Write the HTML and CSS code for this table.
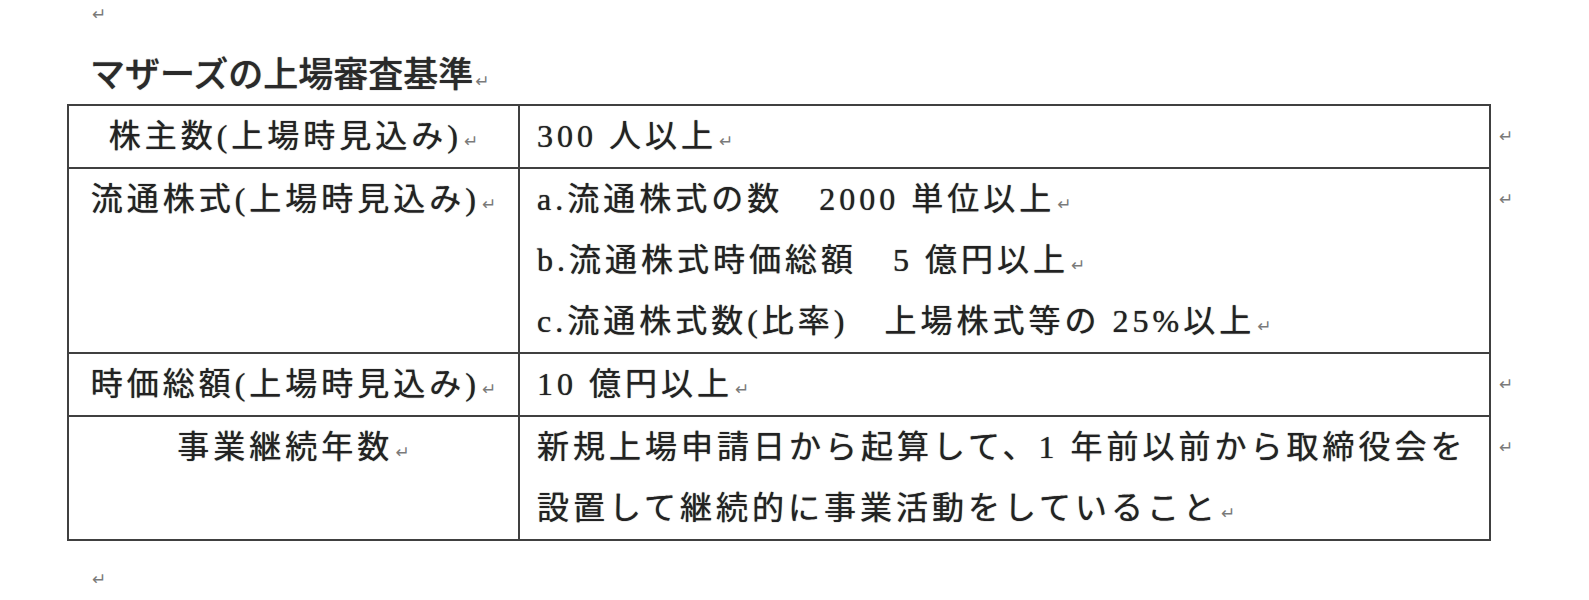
FILE: index.html
```html
<!DOCTYPE html>
<html lang="ja">
<head>
<meta charset="utf-8">
<title>マザーズの上場審査基準</title>
<link rel="stylesheet" href="styles.css">
</head>
<body>
<div class="page">
  <div class="mark-line top"><span class="pm">↵</span></div>
  <div class="title">マザーズの上場審査基準<span class="pm">↵</span></div>
  <div class="table">
    <div class="row first">
      <div class="cl"><div class="ln">株主数(上場時見込み)<span class="pm">↵</span></div></div>
      <div class="cr"><div class="ln">300 人以上<span class="pm">↵</span></div></div>
      <div class="eol"><div class="ln"><span class="pm">↵</span></div></div>
    </div>
    <div class="row">
      <div class="cl"><div class="ln">流通株式(上場時見込み)<span class="pm">↵</span></div></div>
      <div class="cr">
        <div class="ln">a.流通株式の数　2000 単位以上<span class="pm">↵</span></div>
        <div class="ln">b.流通株式時価総額　5 億円以上<span class="pm">↵</span></div>
        <div class="ln">c.流通株式数(比率)　上場株式等の 25%以上<span class="pm">↵</span></div>
      </div>
      <div class="eol"><div class="ln"><span class="pm">↵</span></div></div>
    </div>
    <div class="row">
      <div class="cl"><div class="ln">時価総額(上場時見込み)<span class="pm">↵</span></div></div>
      <div class="cr"><div class="ln">10 億円以上<span class="pm">↵</span></div></div>
      <div class="eol"><div class="ln"><span class="pm">↵</span></div></div>
    </div>
    <div class="row">
      <div class="cl"><div class="ln">事業継続年数<span class="pm">↵</span></div></div>
      <div class="cr">
        <div class="ln">新規上場申請日から起算して、1 年前以前から取締役会を</div>
        <div class="ln">設置して継続的に事業活動をしていること<span class="pm">↵</span></div>
      </div>
      <div class="eol"><div class="ln"><span class="pm">↵</span></div></div>
    </div>
  </div>
  <div class="mark-line bottom"><span class="pm">↵</span></div>
</div>
</body>
</html>
```

FILE: styles.css
```css
html, body {
  margin: 0;
  padding: 0;
  background: #ffffff;
}

body {
  color: #262626;
  font-family: "Liberation Serif", "Noto Sans CJK JP", serif;
}

.page {
  padding-left: 67px;
  width: 1522px;
}

.pm {
  font-family: "DejaVu Sans", sans-serif;
  font-size: 17px;
  line-height: 17px;
  color: #7a7a7a;
  letter-spacing: 0;
  margin-left: 2px;
  font-weight: normal;
  text-shadow: none;
}

.mark-line {
  padding-left: 23px;
  height: 30px;
  line-height: 30px;
}

.mark-line.bottom {
  margin-top: 24px;
}

.title {
  margin-top: 20px;
  padding-left: 23px;
  height: 44px;
  line-height: 44px;
  font-size: 35px;
  font-weight: 500;
  font-family: "Noto Sans CJK JP", sans-serif;
  color: #2a2a2a;
  text-shadow: 0 0 1px #666666;
}

.table {
  margin-top: 10px;
  display: flex;
  flex-direction: column;
}

.row {
  display: flex;
  align-items: stretch;
}

.cl, .cr {
  box-sizing: border-box;
  font-size: 32px;
  letter-spacing: 4px;
  white-space: nowrap;
  border-bottom: 2px solid #404040;
  color: #222222;
  text-shadow: 0 0 1px #444444;
}

.ln {
  height: 61px;
  line-height: 61px;
  overflow: visible;
}

.row.first .cl,
.row.first .cr {
  border-top: 2px solid #404040;
}

.cl {
  width: 453px;
  text-align: center;
  border-left: 2px solid #404040;
  border-right: 2px solid #404040;
}

.cr {
  width: 971px;
  padding-left: 17px;
  border-right: 2px solid #404040;
}

.eol {
  padding-left: 6px;
}

.row.first .eol {
  padding-top: 2px;
}
```
